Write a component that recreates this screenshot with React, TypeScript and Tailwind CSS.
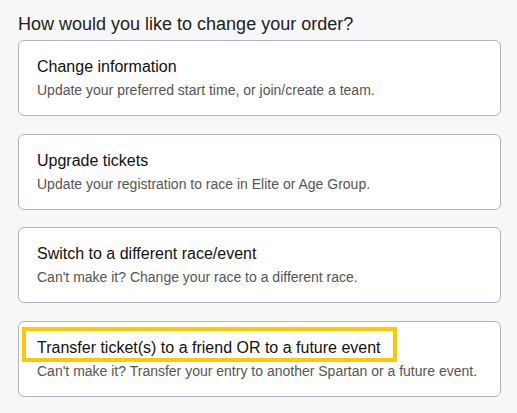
import React from 'react';

interface Option {
    title: string;
    description: string;
    highlighted?: boolean;
}

const options: Option[] = [
    {
        title: 'Change information',
        description: 'Update your preferred start time, or join/create a team.',
    },
    {
        title: 'Upgrade tickets',
        description: 'Update your registration to race in Elite or Age Group.',
    },
    {
        title: 'Switch to a different race/event',
        description: "Can't make it? Change your race to a different race.",
    },
    {
        title: 'Transfer ticket(s) to a friend OR to a future event',
        description: "Can't make it? Transfer your entry to another Spartan or a future event.",
        highlighted: true,
    },
];

const App: React.FC = () => {
    return (
        <div className="min-h-[413px] w-[517px] bg-[#f7f7f7] px-[18px] pt-[13px] font-['Liberation_Sans',Arial,sans-serif]">
            <h2 className="mb-[5px] text-[18px] leading-[22px] text-[#222]">
                How would you like to change your order?
            </h2>

            <div className="flex w-[483px] flex-col gap-[17.5px]">
                {options.map((opt) => (
                    <div
                        key={opt.title}
                        className="relative h-[76px] cursor-pointer rounded-[6px] border border-[#aeb4c0] bg-white pl-[18px] pt-[16px]"
                    >
                        <p className="text-[16px] leading-[20px] text-[#111]">{opt.title}</p>
                        <p className="mt-[4px] text-[14px] leading-[18px] text-[#555]">{opt.description}</p>

                        {/* highlight around the title */}
                        {opt.highlighted && (
                            <div className="pointer-events-none absolute left-[3px] top-[5px] h-[35px] w-[375px] border-4 border-[#ffc800]" />
                        )}
                    </div>
                ))}
            </div>
        </div>
    );
};

export default App;
